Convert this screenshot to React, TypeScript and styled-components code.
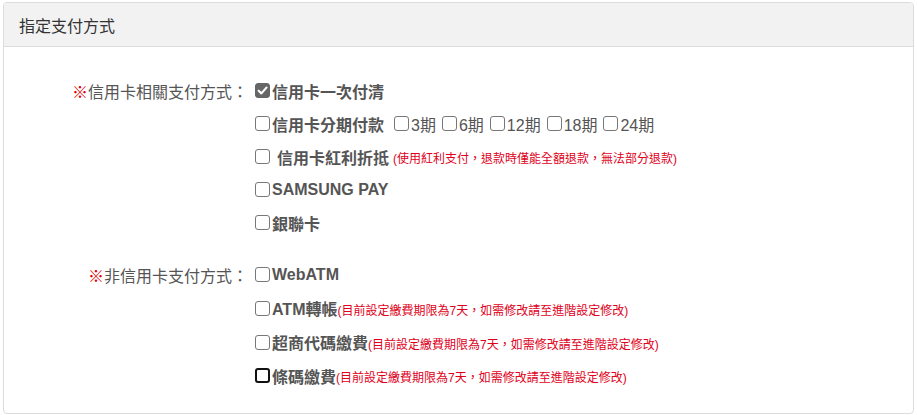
import React from "react";
import styled, { createGlobalStyle } from "styled-components";

const Global = createGlobalStyle`
  html, body { margin: 0; padding: 0; background: #fff; }
  body { font-family: "Liberation Sans", "Noto Sans CJK TC", sans-serif; }
`;

const Page = styled.div`
  padding: 2px 3px;
`;

const Panel = styled.section`
  border: 1px solid #dcdcdc;
  border-radius: 4px;
  background: #fff;
  overflow: hidden;
`;

const Header = styled.header`
  height: 43px;
  display: flex;
  align-items: center;
  padding-left: 15px;
  background: #f2f2f2;
  border-bottom: 1px solid #dcdcdc;
  color: #333;
  font-size: 16px;
  font-family: "Noto Sans CJK TC", sans-serif;
`;

const Body = styled.div`
  padding: 27px 0 21px;
  display: flex;
  flex-direction: column;
  gap: 19px;
`;

const Group = styled.div`
  display: grid;
  grid-template-columns: 244px 1fr;
  column-gap: 7px;
`;

const Label = styled.div`
  height: 33px;
  display: flex;
  align-items: center;
  justify-content: flex-end;
  color: #555;
  font-size: 16px;
  font-family: "Noto Sans CJK TC", sans-serif;
`;

const Mark = styled.span`
  color: #e00000;
`;

const Options = styled.div`
  display: flex;
  flex-direction: column;
`;

const Option = styled.div<{ $h?: number }>`
  height: ${(p) => p.$h ?? 33}px;
  display: flex;
  align-items: center;
  color: #555;
  font-size: 16px;
  font-weight: 700;
  font-family: "Liberation Sans", "Noto Sans CJK TC", sans-serif;
  white-space: nowrap;
`;

const Box = styled.span<{ $checked?: boolean; $focus?: boolean }>`
  box-sizing: border-box;
  width: 15px;
  height: 15px;
  flex: none;
  margin-right: 2px;
  border-radius: 3px;
  border: ${(p) =>
    p.$focus ? "2px solid #111" : p.$checked ? "1px solid #666" : "1px solid #777"};
  background: ${(p) => (p.$checked ? "#666" : "#fff")};
  display: inline-flex;
  align-items: center;
  justify-content: center;
`;

const Sub = styled.span<{ $first?: boolean }>`
  display: inline-flex;
  align-items: center;
  font-weight: 400;
  margin-left: ${(p) => (p.$first ? 10 : 6)}px;
`;

const Note = styled.span`
  color: #e0001b;
  font-size: 12px;
  font-weight: 400;
  font-family: "Liberation Sans", "Noto Sans CJK TC", sans-serif;
  margin-top: 2px;
`;

const Spaced = styled.span`
  margin-left: 5px;
  margin-right: 4px;
`;

const Check = () => (
  <svg width="11" height="11" viewBox="0 0 10 10">
    <path d="M1.5 5.2 L4 7.6 L8.6 2.4" fill="none" stroke="#fff" strokeWidth="2" strokeLinecap="round" strokeLinejoin="round" />
  </svg>
);

const period = ["3期", "6期", "12期", "18期", "24期"];
const note7 = "(目前設定繳費期限為7天，如需修改請至進階設定修改)";

export default function App() {
  return (
    <Page>
      <Global />
      <Panel>
        <Header>指定支付方式</Header>
        <Body>
          <Group>
            <Label>
              <Mark>※</Mark>信用卡相關支付方式：
            </Label>
            <Options>
              <Option>
                <Box $checked>
                  <Check />
                </Box>
                信用卡一次付清
              </Option>
              <Option>
                <Box />
                信用卡分期付款
                {period.map((p, i) => (
                  <Sub key={p} $first={i === 0}>
                    <Box />
                    {p}
                  </Sub>
                ))}
              </Option>
              <Option>
                <Box />
                <Spaced>信用卡紅利折抵</Spaced>
                <Note>(使用紅利支付，退款時僅能全額退款，無法部分退款)</Note>
              </Option>
              <Option>
                <Box />
                SAMSUNG PAY
              </Option>
              <Option>
                <Box />
                銀聯卡
              </Option>
            </Options>
          </Group>
          <Group>
            <Label>
              <Mark>※</Mark>非信用卡支付方式：
            </Label>
            <Options>
              <Option>
                <Box />
                WebATM
              </Option>
              <Option $h={34}>
                <Box />
                ATM轉帳
                <Note>{note7}</Note>
              </Option>
              <Option $h={34}>
                <Box />
                超商代碼繳費
                <Note>{note7}</Note>
              </Option>
              <Option>
                <Box $focus />
                條碼繳費
                <Note>{note7}</Note>
              </Option>
            </Options>
          </Group>
        </Body>
      </Panel>
    </Page>
  );
}
